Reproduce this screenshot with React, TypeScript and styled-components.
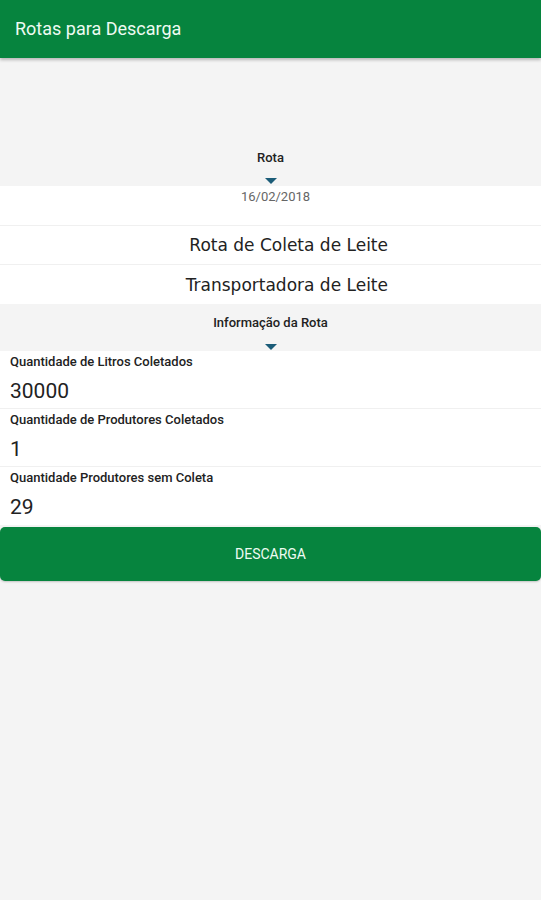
import React from "react";
import styled, { createGlobalStyle } from "styled-components";

const Global = createGlobalStyle`
  html, body { margin: 0; padding: 0; background: #f4f4f4; }
  body { font-family: Roboto, "Noto Sans", sans-serif; }
  * { box-sizing: border-box; }
`;

const Page = styled.div`
  width: 541px;
  min-height: 900px;
  background: #f4f4f4;
  display: flex;
  flex-direction: column;
`;

const AppBar = styled.header`
  height: 58px;
  background: #06843e;
  display: flex;
  align-items: center;
  padding: 0 15px 2px;
  box-shadow: 0 2px 3px rgba(0, 0, 0, 0.25);
  position: relative;
  z-index: 1;
`;

const Title = styled.h1`
  margin: 0;
  font-family: Roboto, sans-serif;
  font-weight: 400;
  font-size: 18px;
  color: #eefbf2;
`;

const SectionHeader = styled.div<{ $top: number; $height: number }>`
  height: ${(p) => p.$height}px;
  padding-top: ${(p) => p.$top}px;
  display: flex;
  flex-direction: column;
  align-items: center;
  background: #f4f4f4;
`;

const SectionTitle = styled.div`
  font-family: Roboto, sans-serif;
  font-weight: 500;
  font-size: 13px;
  color: #222;
  line-height: 14px;
`;

const Caret = styled.div<{ $gap: number }>`
  margin-top: ${(p) => p.$gap}px;
  width: 0;
  height: 0;
  border-left: 6px solid transparent;
  border-right: 6px solid transparent;
  border-top: 6px solid #1b5c78;
`;

const WhiteBlock = styled.div`
  background: #ffffff;
  display: flex;
  flex-direction: column;
`;

const DateRow = styled.div`
  height: 40px;
  display: flex;
  justify-content: center;
  padding: 3px 0 0 10px;
  font-family: Roboto, sans-serif;
  font-size: 13px;
  color: #666;
  border-bottom: 1px solid #f0f0f0;
`;

const PickerRow = styled.div<{ $last?: boolean }>`
  height: 39px;
  display: flex;
  align-items: center;
  justify-content: flex-end;
  padding-right: 153px;
  font-family: "DejaVu Sans", sans-serif;
  font-size: 17px;
  color: #222;
  border-bottom: ${(p) => (p.$last ? "none" : "1px solid #f0f0f0")};
`;

const Field = styled.div<{ $last?: boolean }>`
  height: 58px;
  padding: 3px 10px 0;
  display: flex;
  flex-direction: column;
  border-bottom: ${(p) => (p.$last ? "none" : "1px solid #f0f0f0")};
`;

const FieldLabel = styled.div`
  font-family: Roboto, sans-serif;
  font-weight: 500;
  font-size: 13px;
  line-height: 16px;
  color: #222;
`;

const FieldValue = styled.div`
  font-family: Roboto, sans-serif;
  font-size: 21px;
  line-height: 24px;
  margin-top: 9px;
  color: #222;
`;

const ActionButton = styled.button`
  margin-top: 2px;
  height: 54px;
  width: 541px;
  border: none;
  border-radius: 5px;
  background: #06843e;
  color: #eefbf2;
  font-family: Roboto, sans-serif;
  font-size: 14px;
  box-shadow: 0 1px 2px rgba(0, 0, 0, 0.2);
`;

const fields = [
  { label: "Quantidade de Litros Coletados", value: "30000" },
  { label: "Quantidade de Produtores Coletados", value: "1" },
  { label: "Quantidade Produtores sem Coleta", value: "29" },
];

export default function App() {
  return (
    <Page>
      <Global />
      <AppBar>
        <Title>Rotas para Descarga</Title>
      </AppBar>
      <SectionHeader $top={93} $height={128}>
        <SectionTitle>Rota</SectionTitle>
        <Caret $gap={13} />
      </SectionHeader>
      <WhiteBlock>
        <DateRow>16/02/2018</DateRow>
        <PickerRow>Rota de Coleta de Leite</PickerRow>
        <PickerRow $last>Transportadora de Leite</PickerRow>
      </WhiteBlock>
      <SectionHeader $top={12} $height={47}>
        <SectionTitle>Informação da Rota</SectionTitle>
        <Caret $gap={14} />
      </SectionHeader>
      <WhiteBlock>
        {fields.map((f, i) => (
          <Field key={f.label} $last={i === fields.length - 1}>
            <FieldLabel>{f.label}</FieldLabel>
            <FieldValue>{f.value}</FieldValue>
          </Field>
        ))}
      </WhiteBlock>
      <ActionButton>DESCARGA</ActionButton>
    </Page>
  );
}
